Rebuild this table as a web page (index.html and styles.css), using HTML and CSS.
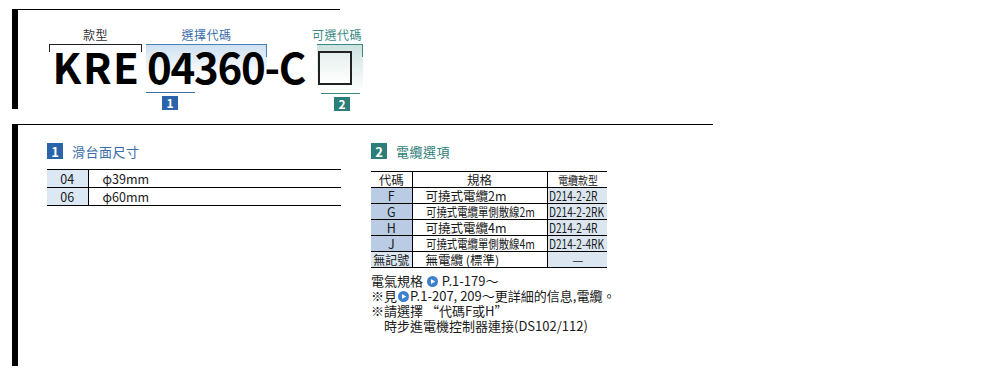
FILE: index.html
```html
<!DOCTYPE html>
<html lang="zh-Hant">
<head>
<meta charset="utf-8">
<link rel="stylesheet" href="styles.css">
</head>
<body>
<section class="top">
  <div class="diagram">
    <div class="grp grp-model">
      <div class="lbl lbl-dark">款型</div>
      <div class="bracket">
        <span class="big kre">KRE</span>
      </div>
    </div>
    <div class="grp grp-code">
      <div class="lbl lbl-blue">選擇代碼</div>
      <div class="codebox">
        <span class="big code">04360-C</span>
      </div>
      <div class="under under-blue"></div>
      <div class="badge badge-blue small">1</div>
    </div>
    <div class="grp grp-opt">
      <div class="lbl lbl-teal">可選代碼</div>
      <div class="optbox">
        <div class="square"></div>
      </div>
      <div class="under under-teal"></div>
      <div class="badge badge-teal small">2</div>
    </div>
  </div>
</section>

<section class="bottom">
  <div class="col col1">
    <h2 class="head"><span class="badge badge-blue">1</span><span class="htext blue">滑台面尺寸</span></h2>
    <table class="t1">
      <tr><td class="c1">04</td><td class="c2">φ39mm</td></tr>
      <tr><td class="c1">06</td><td class="c2">φ60mm</td></tr>
    </table>
  </div>
  <div class="col col2">
    <h2 class="head"><span class="badge badge-teal">2</span><span class="htext teal">電纜選項</span></h2>
    <table class="t2">
      <tr class="hdr"><th class="k">代碼</th><th class="s">規格</th><th class="m mh"><span class="sq sq-h">電纜款型</span></th></tr>
      <tr><td class="k">F</td><td class="s">可撓式電纜2m</td><td class="m"><span class="sq sq-m">D214-2-2R</span></td></tr>
      <tr><td class="k">G</td><td class="s"><span class="sq sq-s">可撓式電纜單側散線2m</span></td><td class="m"><span class="sq sq-m">D214-2-2RK</span></td></tr>
      <tr><td class="k">H</td><td class="s">可撓式電纜4m</td><td class="m"><span class="sq sq-m">D214-2-4R</span></td></tr>
      <tr><td class="k">J</td><td class="s"><span class="sq sq-s">可撓式電纜單側散線4m</span></td><td class="m"><span class="sq sq-m">D214-2-4RK</span></td></tr>
      <tr><td class="k light">無記號</td><td class="s">無電纜 (標準)</td><td class="m center">—</td></tr>
    </table>
    <div class="notes">
      <p>電氣規格 <svg class="play" viewBox="0 0 12 12"><circle cx="6" cy="6" r="6" fill="#3d7fcc"/><path d="M4.3 3.2 L9 6 L4.3 8.8 Z" fill="#fff"/></svg> P.1-179～</p>
      <p>※見<svg class="play" viewBox="0 0 12 12"><circle cx="6" cy="6" r="6" fill="#3d7fcc"/><path d="M4.3 3.2 L9 6 L4.3 8.8 Z" fill="#fff"/></svg>P.1-207, 209～更詳細的信息,電纜。</p>
      <p>※請選擇 “代碼F或H”</p>
      <p class="indent">時步進電機控制器連接(DS102/112)</p>
    </div>
  </div>
</section>
</body>
</html>
```

FILE: styles.css
```css
* { box-sizing: border-box; }
html, body { margin: 0; padding: 0; background: #fff; }
body {
  font-family: "Noto Sans CJK TC", "Noto Sans", sans-serif;
  color: #1a1a1a;
  padding: 9px 0 0 12px;
}

.top {
  width: 328px;
  height: 100px;
  border-left: 6px solid #000;
  border-top: 1px solid #000;
}

.diagram {
  display: flex;
  align-items: flex-start;
  padding: 17px 0 0 31px;
}

.grp { display: flex; flex-direction: column; align-items: center; }

.lbl {
  font-size: 12px;
  line-height: 16px;
  height: 17px;
  letter-spacing: 0.5px;
}
.lbl-dark { color: #333; }
.lbl-blue { color: #3b6ea7; }
.lbl-teal { color: #3a8a83; }

.big {
  font-size: 42px;
  font-weight: 700;
  line-height: 42px;
  color: #000;
  white-space: nowrap;
}
.kre { letter-spacing: 1.5px; margin-left: 2px; }
.code { letter-spacing: -1.3px; }

.bracket {
  width: 93px;
  height: 44px;
  border-top: 1px solid #222;
  position: relative;
  display: flex;
  justify-content: center;
}
.bracket::before, .bracket::after {
  content: "";
  position: absolute;
  top: 0;
  width: 1px;
  height: 7px;
  background: #222;
}
.bracket::before { left: 0; }
.bracket::after { right: 0; }

.grp-model { width: 93px; }

.grp-code { margin-left: 4px; width: 121px; align-items: flex-start; }
.grp-code .lbl { align-self: center; }
.codebox {
  width: 121px;
  height: 32px;
  border-top: 1px solid #4a80b8;
  background: linear-gradient(#cfe0f0, #fff);
  position: relative;
  overflow: visible;
  padding-left: 1px;
}
.codebox::after {
  content: "";
  position: absolute;
  right: 0; top: 0;
  width: 1px; height: 12px;
  background: #4a80b8;
}
.under { height: 1px; margin-top: 16px; }
.under-blue { background: #3b6ea7; width: 49px; }
.grp-code .badge { margin-left: 16px; }

.grp-opt { margin-left: 50px; width: 46px; align-items: flex-start; }
.grp-opt .lbl { margin-left: -5px; }
.optbox {
  width: 46px;
  height: 48px;
  border-top: 1px solid #3a8a83;
  background: linear-gradient(#cde3df, #fff);
  position: relative;
  padding: 6px 0 0 1px;
}
.optbox::after {
  content: "";
  position: absolute;
  right: 0; top: 0;
  width: 1px; height: 12px;
  background: #3a8a83;
}
.square {
  width: 34px;
  height: 34px;
  border: 2px solid #222;
  background: linear-gradient(#e6f0ee, #fff);
}
.under-teal { background: #3a8a83; width: 39px; margin-left: 4px; margin-top: 1px; }
.grp-opt .badge { margin-left: 17px; }

.badge {
  display: inline-flex;
  align-items: center;
  justify-content: center;
  color: #fff;
  font-weight: 700;
  width: 16px;
  height: 16px;
  font-size: 13px;
  line-height: 1;
}
.badge.small { width: 16px; height: 14px; font-size: 12px; margin-top: 3px; }
.badge-blue { background: #2b64ab; }
.badge-teal { background: #2b7f78; }

.bottom {
  margin-top: 15px;
  width: 701px;
  height: 242px;
  border-left: 6px solid #000;
  border-top: 1px solid #000;
  display: flex;
  padding: 18px 0 0 29px;
}

.col1 { width: 294px; }
.col2 { width: 236px; margin-left: 30px; }

.head {
  margin: 0;
  display: flex;
  align-items: center;
  height: 16px;
  font-weight: 400;
}
.htext { font-size: 13px; margin-left: 9px; letter-spacing: 0.5px; }
.blue { color: #3b6ea7; }
.teal { color: #2f8078; }

table { border-collapse: collapse; table-layout: fixed; }

.t1 {
  margin-top: 10px;
  width: 294px;
  font-size: 12.5px;
}
.t1 td {
  border-top: 1px solid #000;
  border-bottom: 1px solid #000;
  height: 18px;
  padding: 0;
  line-height: 16px;
}
.t1 .c1 {
  width: 41px;
  background: #dde8f5;
  text-align: center;
  border-right: 1px solid #000;
}
.t1 .c2 { padding-left: 14px; }

.t2 {
  margin-top: 12px;
  width: 236px;
  font-size: 12.5px;
}
.t2 th, .t2 td {
  border: 1px solid #000;
  border-left: 0;
  border-right: 1px solid #000;
  height: 16px;
  padding: 0;
  line-height: 14px;
  font-weight: 400;
  white-space: nowrap;
}
.t2 tr > :last-child { border-right: 0; }
.t2 .k { width: 41px; text-align: center; background: #b9cce4; }
.t2 .hdr .k, .t2 .hdr th { background: #fff; }
.t2 .k.light { background: #dce6f1; font-size: 12px; }
.t2 .s { width: 135px; padding-left: 13px; text-align: left; }
.t2 th.s { text-align: center; padding-left: 0; }
.t2 .m { background: #dce6f1; padding-left: 1px; text-align: left; }
.t2 .mh { text-align: center; }
.t2 .center { text-align: center; }

.sq { display: inline-block; transform-origin: 0 50%; }
.sq-s { transform: scaleX(0.83); }
.sq-m { transform: scaleX(0.81); }
.sq-h { font-size: 11.5px; transform: scaleX(0.86); transform-origin: 50% 50%; }

.notes {
  margin-top: 5px;
  font-size: 13px;
  line-height: 15px;
  letter-spacing: 0;
}
.notes p { margin: 0; white-space: nowrap; }
.notes .indent { padding-left: 13px; }
.play { width: 11px; height: 11px; vertical-align: -1px; margin: 0 1px; }
```
